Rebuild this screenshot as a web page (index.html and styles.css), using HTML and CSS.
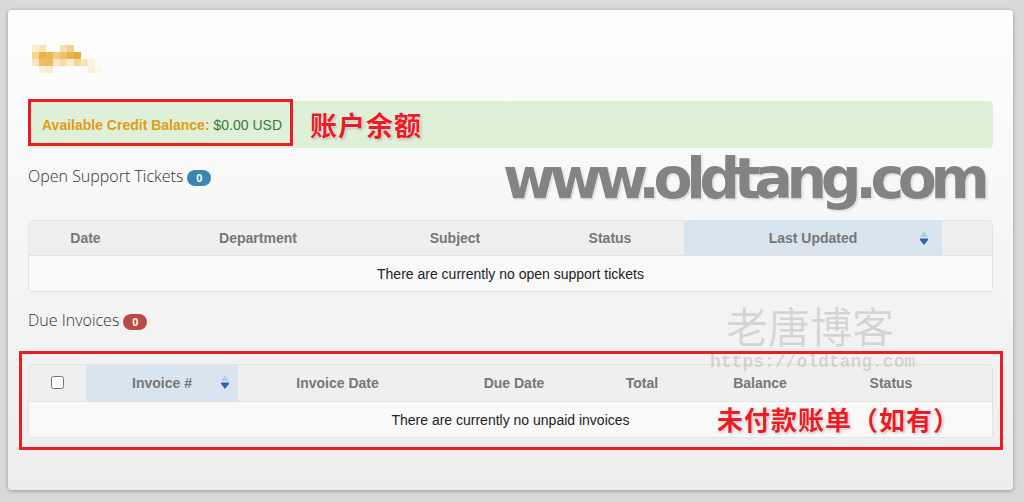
FILE: index.html
```html
<!DOCTYPE html>
<html lang="zh-CN">
<head>
    <meta charset="UTF-8">
    <meta name="viewport" content="width=device-width, initial-scale=1.0">
    <title>Client Area</title>

    <link rel="stylesheet" href="styles.css">

</head>
<body>
    <div class="painel">

        <!-- logo borrado -->
        <div class="logo">
            <svg width="72" height="28" viewBox="0 0 72 28">
                <rect x="0" y="0" width="7" height="7" fill="#fbeccc"/>
                <rect x="7" y="0" width="7" height="7" fill="#f8e2b4"/>
                <rect x="28" y="0" width="7" height="7" fill="#f7deae"/>
                <rect x="35" y="0" width="7" height="7" fill="#f3d08c"/>
                <rect x="0" y="7" width="7" height="7" fill="#f3d490"/>
                <rect x="7" y="7" width="7" height="7" fill="#e9b44a"/>
                <rect x="14" y="7" width="7" height="7" fill="#eab856"/>
                <rect x="21" y="7" width="7" height="7" fill="#f1cc82"/>
                <rect x="28" y="7" width="7" height="7" fill="#eec070"/>
                <rect x="35" y="7" width="7" height="7" fill="#e8b246"/>
                <rect x="42" y="7" width="7" height="7" fill="#e6ad3c"/>
                <rect x="0" y="14" width="7" height="7" fill="#f8e4bc"/>
                <rect x="7" y="14" width="7" height="7" fill="#eebf68"/>
                <rect x="14" y="14" width="7" height="7" fill="#ecbc62"/>
                <rect x="21" y="14" width="7" height="7" fill="#f9e8c8"/>
                <rect x="28" y="14" width="7" height="7" fill="#f6dcaa"/>
                <rect x="35" y="14" width="7" height="7" fill="#fbeed6"/>
                <rect x="42" y="14" width="7" height="7" fill="#f4d698"/>
                <rect x="49" y="14" width="7" height="7" fill="#f8e4bc"/>
                <rect x="56" y="14" width="7" height="7" fill="#fcf2e0"/>
                <rect x="7" y="21" width="7" height="7" fill="#fbf0dc"/>
                <rect x="14" y="21" width="7" height="7" fill="#f9ead0"/>
                <rect x="56" y="21" width="7" height="7" fill="#fbefda"/>
                <rect x="63" y="21" width="7" height="7" fill="#fdf6ea"/>
            </svg>
        </div>

        <div class="saldo">
            <span class="saldo-rotulo">Available Credit Balance:</span>
            <span class="saldo-valor">$0.00 USD</span>
            <span class="marca marca-saldo"></span>
            <span class="nota nota-saldo">账户余额</span>
        </div>

        <h3 class="titulo">Open Support Tickets <span class="selo selo-azul">0</span></h3>

        <div class="tabela-caixa">
            <table class="tabela">
                <colgroup>
                    <col style="width: 113px">
                    <col style="width: 232px">
                    <col style="width: 162px">
                    <col style="width: 148px">
                    <col style="width: 258px">
                    <col>
                </colgroup>
                <thead>
                    <tr>
                        <th>Date</th>
                        <th>Department</th>
                        <th>Subject</th>
                        <th>Status</th>
                        <th class="ordenado">Last Updated
                            <svg class="seta seta-tickets" width="10" height="16" viewBox="0 0 10 16">
                                <path d="M5 1 L9 7 L1 7 Z" fill="#b3cfe6"/>
                                <path d="M1 8.5 L9 8.5 L9 10 L5 15 L1 10 Z" fill="#2c67b0"/>
                            </svg>
                        </th>
                        <th></th>
                    </tr>
                </thead>
                <tbody>
                    <tr>
                        <td colspan="6">There are currently no open support tickets</td>
                    </tr>
                </tbody>
            </table>
        </div>

        <h3 class="titulo">Due Invoices <span class="selo selo-vermelho">0</span></h3>

        <div class="tabela-caixa faturas">
            <table class="tabela">
                <colgroup>
                    <col style="width: 57px">
                    <col style="width: 152px">
                    <col style="width: 199px">
                    <col style="width: 154px">
                    <col style="width: 102px">
                    <col style="width: 134px">
                    <col style="width: 128px">
                    <col>
                </colgroup>
                <thead>
                    <tr>
                        <th><input type="checkbox" class="marcar"></th>
                        <th class="ordenado">Invoice #
                            <svg class="seta seta-faturas" width="10" height="16" viewBox="0 0 10 16">
                                <path d="M5 1 L9 7 L1 7 Z" fill="#b3cfe6"/>
                                <path d="M1 8.5 L9 8.5 L9 10 L5 15 L1 10 Z" fill="#2c67b0"/>
                            </svg>
                        </th>
                        <th>Invoice Date</th>
                        <th>Due Date</th>
                        <th>Total</th>
                        <th>Balance</th>
                        <th>Status</th>
                        <th></th>
                    </tr>
                </thead>
                <tbody>
                    <tr>
                        <td colspan="8">There are currently no unpaid invoices</td>
                    </tr>
                </tbody>
            </table>
            <span class="marca marca-faturas"></span>
            <span class="nota nota-faturas">未付款账单（如有）</span>
        </div>

        <!-- marcas d'agua -->
        <div class="agua agua-site">www.oldtang.com</div>
        <div class="agua agua-cn">老唐博客</div>
        <div class="agua agua-url">https://oldtang.com</div>
    </div>
</body>
</html>
```

FILE: styles.css
```css
*{
    margin: 0;
    padding: 0;
    box-sizing: border-box;
}

body{
    background-color: #d9d9d9;
    font-family: "Liberation Sans", Arial, sans-serif;
    font-size: 14px;
    color: #222;
    padding: 10px 11px 12px 8px;
}

.painel{
    position: relative;
    height: 480px;
    padding: 35px 20px 0 20px;
    background: linear-gradient(#fefefe, #ededed);
    border-radius: 4px;
    box-shadow: 0 1px 4px rgba(0, 0, 0, 0.3);
}

.logo{
    height: 28px;
    padding-left: 4px;
}

.logo svg{
    display: block;
}

.saldo{
    position: relative;
    margin-top: 28px;
    height: 47px;
    padding: 0 14px;
    display: flex;
    align-items: center;
    gap: 4px;
    background-color: #dff0d8;
    border-radius: 4px;
}

.saldo-rotulo{
    font-weight: bold;
    color: #e39b12;
}

.saldo-valor{
    color: #3c763d;
}

.marca{
    position: absolute;
    border: 3px solid #ec1c24;
}

.marca-saldo{
    left: 0;
    top: -2px;
    width: 265px;
    height: 47px;
}

.nota{
    position: absolute;
    font-family: "Noto Sans CJK SC", sans-serif;
    font-weight: bold;
    color: #ec1c24;
    text-shadow: 0 0 2px #fff, 0 0 2px #fff, 1px 1px 3px rgba(0, 0, 0, 0.35);
    white-space: nowrap;
}

.nota-saldo{
    left: 282px;
    top: 6px;
    font-size: 27px;
    letter-spacing: 1px;
    line-height: 36px;
}

.titulo{
    margin: 17px 0 33px 0;
    height: 22px;
    line-height: 22px;
    font-family: "Open Sans", sans-serif;
    font-weight: 300;
    font-size: 16px;
    color: #333;
    display: flex;
    align-items: center;
    gap: 4px;
}

.selo{
    display: inline-block;
    min-width: 24px;
    height: 16px;
    line-height: 16px;
    padding: 0 7px;
    border-radius: 8px;
    font-family: "Liberation Sans", Arial, sans-serif;
    font-size: 11px;
    font-weight: bold;
    color: #fff;
    text-align: center;
    margin-top: 3px;
}

.selo-azul{
    background-color: #3a87ad;
}

.selo-vermelho{
    background-color: #b94a48;
}

.tabela-caixa{
    position: relative;
}

.tabela{
    width: 100%;
    table-layout: fixed;
    border-collapse: separate;
    border-spacing: 0;
    border: 1px solid #e3e3e3;
    border-radius: 4px;
    overflow: hidden;
}

.tabela th{
    position: relative;
    height: 35px;
    padding-bottom: 1px;
    background-color: #efefef;
    color: #777;
    font-weight: bold;
    text-align: center;
    border-bottom: 1px solid #e2e2e2;
}

.tabela th.ordenado{
    background-color: #d9e5ee;
}

.tabela td{
    height: 35px;
    background-color: #f9f9f9;
    text-align: center;
}

.seta{
    position: absolute;
    top: 9px;
}

.seta-tickets{
    right: 13px;
}

.seta-faturas{
    right: 8px;
}

.marcar{
    display: block;
    width: 13px;
    height: 13px;
    margin: 0 auto;
}

.faturas .tabela th{
    height: 37px;
}

.marca-faturas{
    left: -9px;
    top: -13px;
    right: -10px;
    bottom: -12px;
}

.nota-faturas{
    left: 689px;
    top: 36px;
    font-size: 26px;
    letter-spacing: 1px;
    line-height: 38px;
}

.agua{
    position: absolute;
    white-space: nowrap;
    pointer-events: none;
}

.agua-site{
    left: 495px;
    top: 133px;
    font-family: "DejaVu Sans", Verdana, sans-serif;
    font-weight: bold;
    font-size: 57px;
    letter-spacing: -6.4px;
    line-height: 70px;
    color: #838383;
    text-shadow: 0 0 1px #fff, 0 0 2px #fff, 0 0 2px #fff, 1px 1px 2px rgba(0, 0, 0, 0.25);
}

.agua-cn{
    left: 718px;
    top: 294px;
    font-family: "Noto Sans CJK SC", sans-serif;
    font-size: 42px;
    line-height: 42px;
    color: rgba(0, 0, 0, 0.12);
}

.agua-url{
    left: 702px;
    top: 342px;
    font-family: "Liberation Mono", "Courier New", monospace;
    font-weight: bold;
    font-size: 18px;
    line-height: 20px;
    color: rgba(0, 0, 0, 0.13);
}
```
